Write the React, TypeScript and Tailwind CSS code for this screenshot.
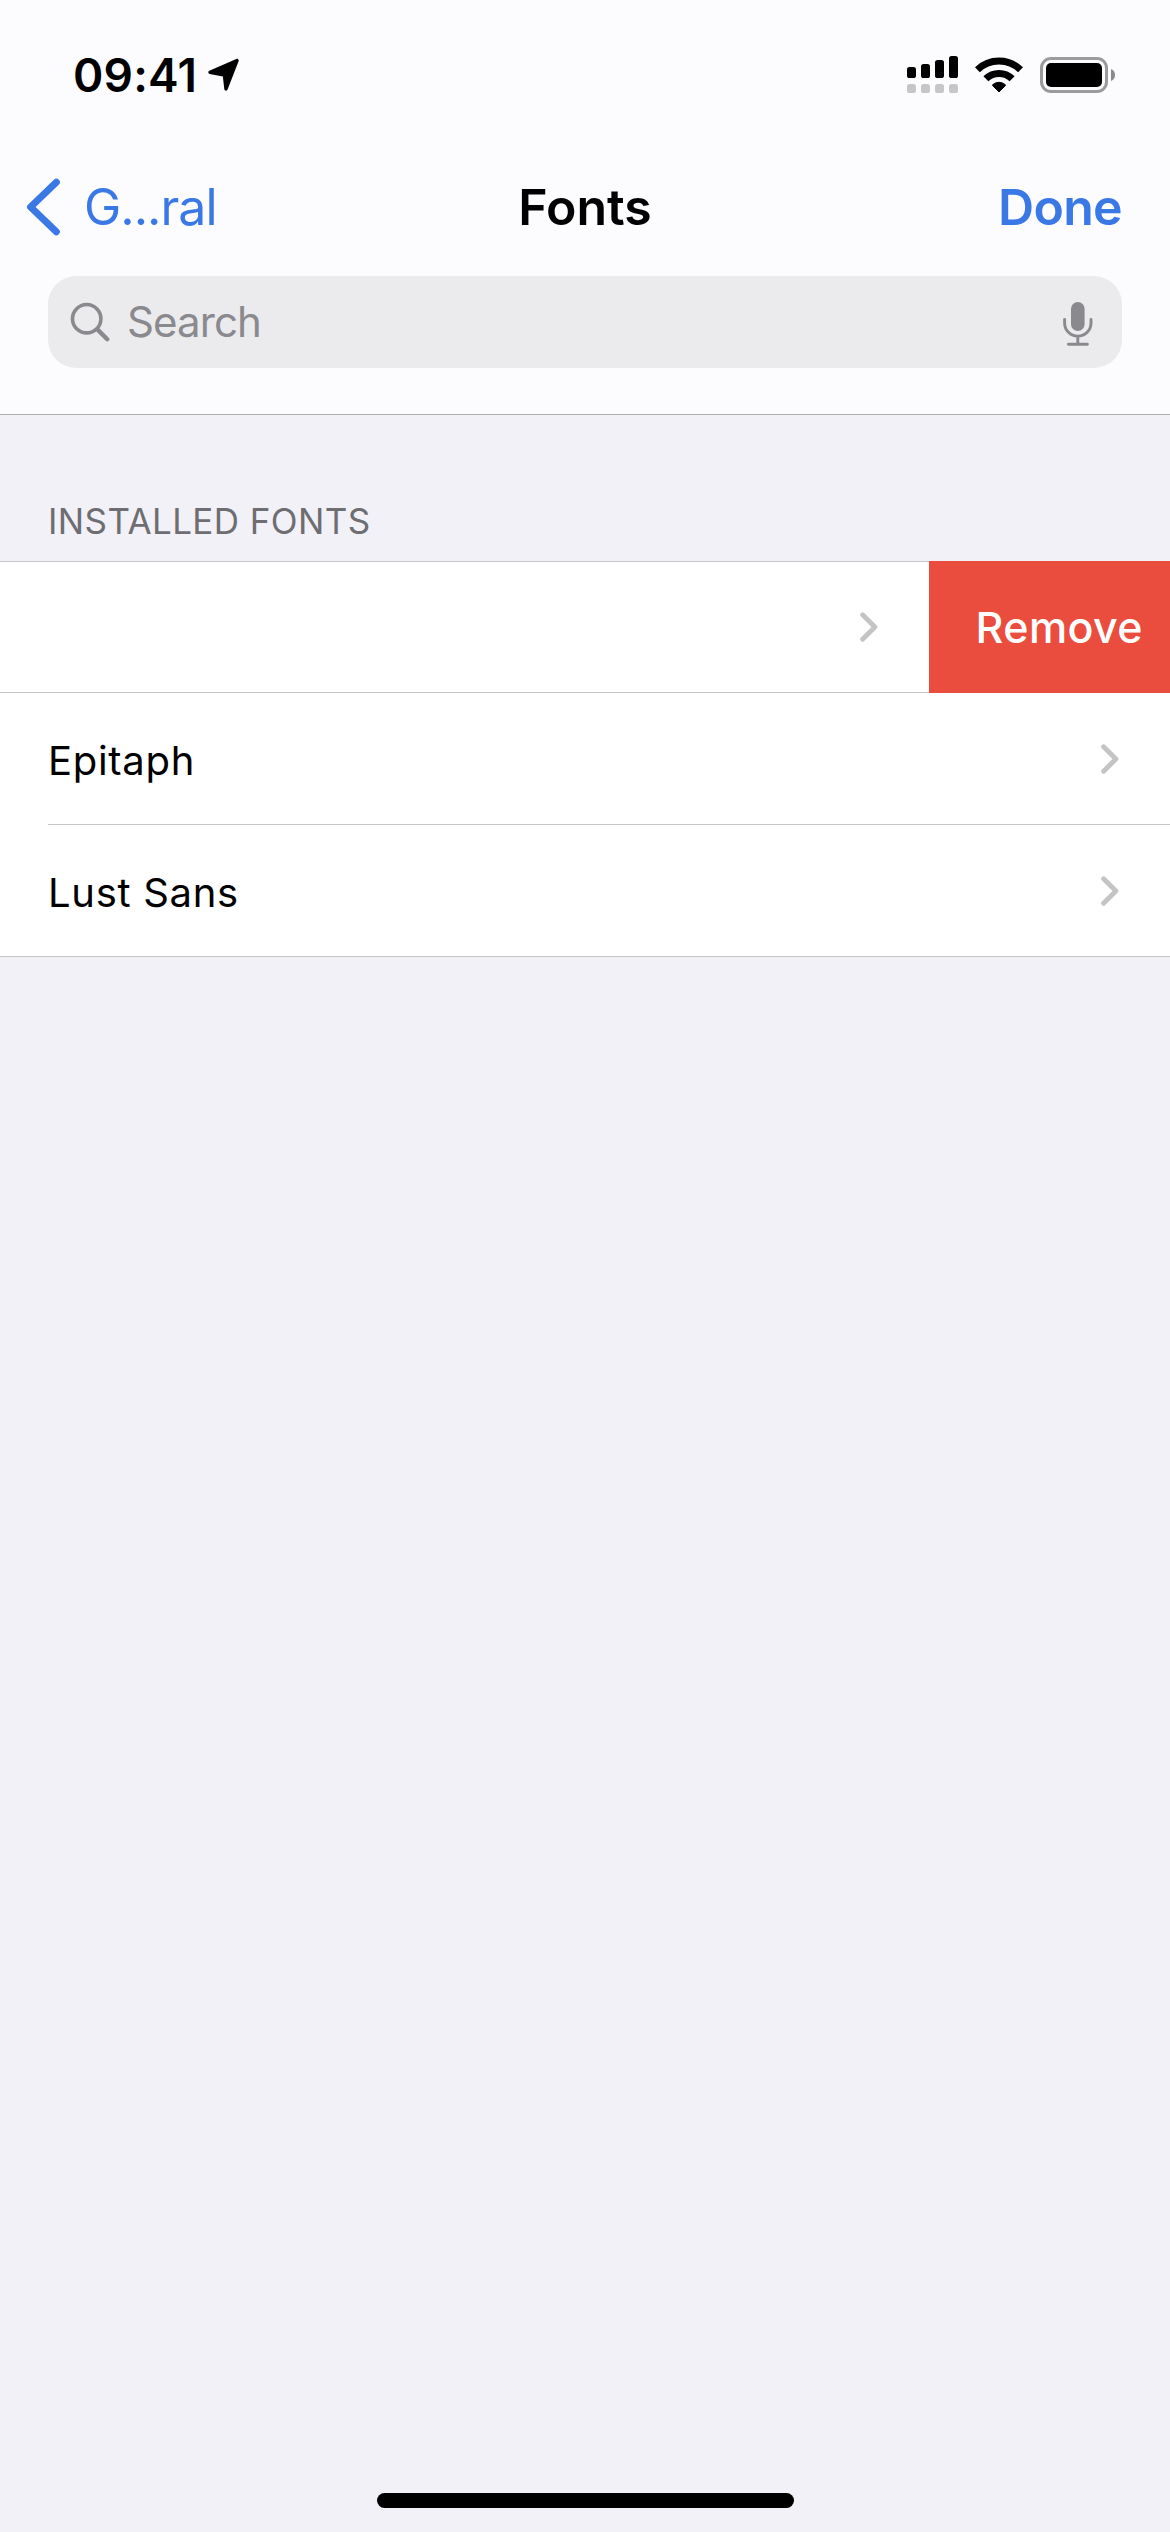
type IconProps = {
    className?: string;
};

type FontRowProps = {
    name: string;
    last?: boolean;
};

const LocationIcon: React.FC<IconProps> = ({ className }) => (
    <svg className={className} viewBox="0 0 32 34" fill="currentColor">
        <path
            d="M2 14.4 29 2.6 18 31 16.4 17Z"
            stroke="currentColor"
            strokeWidth="3.4"
            strokeLinejoin="round"
        />
    </svg>
);

const SignalIcon: React.FC<IconProps> = ({ className }) => (
    <svg className={className} viewBox="0 0 52 38" fill="currentColor">
        <rect x="0" y="11" width="9" height="11" rx="2.6" />
        <rect x="14" y="8" width="9" height="14" rx="2.6" />
        <rect x="28" y="4" width="9" height="18" rx="2.6" />
        <rect x="42" y="0" width="9" height="22" rx="2.6" />
        <g fill="#c6c6c8">
            <rect x="0" y="28" width="9" height="9" rx="2.6" />
            <rect x="14" y="28" width="9" height="9" rx="2.6" />
            <rect x="28" y="28" width="9" height="9" rx="2.6" />
            <rect x="42" y="28" width="9" height="9" rx="2.6" />
        </g>
    </svg>
);

const WifiIcon: React.FC<IconProps> = ({ className }) => (
    <svg className={className} viewBox="0 0 48 36" fill="none" stroke="currentColor" strokeWidth="7">
        <path d="M2.4 12.8a31 31 0 0 1 43.2 0" />
        <path d="M10.9 21.8a18.6 18.6 0 0 1 26.2 0" />
        <path
            d="M24 35 17.6 28.6Q17.2 28 17.8 27.6 24 23 30.2 27.6 30.8 28 30.4 28.6Z"
            fill="currentColor"
            strokeWidth="1"
            strokeLinejoin="round"
        />
    </svg>
);

const BatteryIcon: React.FC<IconProps> = ({ className }) => (
    <svg className={className} viewBox="0 0 76 36">
        <rect x="1.5" y="1.5" width="65" height="33" rx="9.5" fill="none" stroke="#9b9b9d" strokeWidth="3" />
        <rect x="6" y="6" width="56" height="24" rx="5" fill="#000" />
        <path d="M71 12c2.6 1 4 3.3 4 6s-1.4 5-4 6Z" fill="#8b8b8d" />
    </svg>
);

const BackIcon: React.FC<IconProps> = ({ className }) => (
    <svg className={className} viewBox="0 0 34 58" fill="none" stroke="currentColor">
        <path d="M30.3 4.3 4.6 29 30.3 53.7" strokeWidth="7" strokeLinecap="round" strokeLinejoin="round" />
    </svg>
);

const SearchIcon: React.FC<IconProps> = ({ className }) => (
    <svg className={className} viewBox="0 0 40 40" fill="none" stroke="currentColor">
        <circle cx="16.7" cy="16.7" r="14.2" strokeWidth="3.6" />
        <path d="M27.4 27.4 37.2 37.2" strokeWidth="4.4" strokeLinecap="round" />
    </svg>
);

const MicIcon: React.FC<IconProps> = ({ className }) => (
    <svg className={className} viewBox="0 0 30 44" fill="none" stroke="currentColor">
        <rect x="8" y="0" width="13.6" height="29" rx="6.8" fill="currentColor" stroke="none" />
        <path
            d="M1.6 17.5v3.5a13.2 13.2 0 0 0 26.4 0v-3.5M14.8 34.5v7.5M5.4 42.3h19"
            strokeWidth="2.9"
            strokeLinecap="round"
        />
    </svg>
);

const ChevronIcon: React.FC<IconProps> = ({ className }) => (
    <svg className={className} viewBox="0 0 18 30" fill="none" stroke="currentColor">
        <path d="M2.6 2.8 14.9 15 2.6 27.2" strokeWidth="4.8" strokeLinecap="round" strokeLinejoin="round" />
    </svg>
);

const StatusBar = () => (
    <div className="flex h-[149px] items-center justify-between pr-[54px] pl-[73px]">
        <div className="flex items-center">
            <span className="w-[135px] text-[46px] leading-none font-semibold tracking-[0.2px]">09:41</span>
            <LocationIcon className="h-[34px] w-8" />
        </div>
        <div className="flex items-center">
            <SignalIcon className="mr-4 h-[38px] w-[52px]" />
            <WifiIcon className="mr-[17px] h-9 w-12" />
            <BatteryIcon className="h-9 w-[76px]" />
        </div>
    </div>
);

const NavBar = () => (
    <div className="grid h-[115px] grid-cols-3 items-center text-[50px] leading-none">
        <button className="flex items-center pl-[26px] text-[#3a78e6]">
            <BackIcon className="h-[58px] w-[34px]" />
            <span className="ml-6 tracking-[-1px]">G...ral</span>
        </button>
        <h1 className="text-center font-semibold">Fonts</h1>
        <button className="pr-12 text-right font-semibold tracking-[-0.7px] text-[#3a78e6]">Done</button>
    </div>
);

const SearchField = () => (
    <div className="mx-12 mt-3 flex h-[92px] items-center rounded-[28px] bg-[#ebebed] pr-[29px] pl-[22px] text-[#8a8a8e]">
        <SearchIcon className="h-10 w-10" />
        <span className="ml-[17px] flex-1 text-[42px] leading-none tracking-[-0.9px]">Search</span>
        <MicIcon className="mt-1 h-11 w-[30px]" />
    </div>
);

const FontRow: React.FC<FontRowProps> = ({ name, last }) => (
    <li className="pl-12">
        <div
            className={
                last
                    ? 'flex h-[131px] items-center justify-between pr-[51px]'
                    : 'flex h-[132px] items-center justify-between border-b border-[#c6c6c9] pr-[51px]'
            }
        >
            <span className="pt-1 text-[40px] leading-none tracking-[0.7px]">{name}</span>
            <ChevronIcon className="h-[30px] w-[18px] text-[#c4c4c6]" />
        </div>
    </li>
);

const App = () => {
    return (
        <div className="flex h-[2532px] w-[1170px] flex-col overflow-hidden bg-[#f2f1f7] font-['Inter',sans-serif] text-black">
            <header className="h-[415px] border-b border-[#adadb0] bg-[#fcfcfe]">
                <StatusBar />
                <NavBar />
                <SearchField />
            </header>
            <main className="flex-1">
                <h2 className="mt-[86px] mb-5 pl-12 text-[35px] leading-10 tracking-[0.4px] text-[#6d6d72]">
                    INSTALLED FONTS
                </h2>
                <ul className="border-y border-[#c6c6c9] bg-white">
                    {/* swiped row, its name is pushed off the left edge */}
                    <li className="flex h-[131px] items-stretch">
                        <div className="flex flex-1 items-center justify-end border-b border-[#c6c6c9] pr-[51px]">
                            <ChevronIcon className="h-[30px] w-[18px] text-[#c4c4c6]" />
                        </div>
                        <button className="-mt-px w-[241px] bg-[#ea4d3d] pr-[27px] text-right text-[43px] leading-none font-medium tracking-[0.4px] text-white">
                            Remove
                        </button>
                    </li>
                    <FontRow name="Epitaph" />
                    <FontRow name="Lust Sans" last />
                </ul>
            </main>
            <div className="mb-6 h-[15px] w-[417px] self-center rounded-full bg-black" />
        </div>
    );
};

export default App;
